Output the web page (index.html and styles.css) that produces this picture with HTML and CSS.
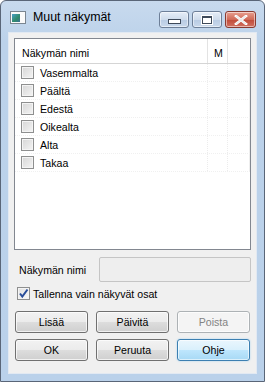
FILE: index.html
```html
<!DOCTYPE html>
<html lang="fi">
<head>
  <meta charset="UTF-8">
  <title>Muut näkymät</title>
  <link rel="stylesheet" href="styles.css">
</head>
<body>
  <div class="window">
    <!-- Otsikkorivi -->
    <div class="titlebar">
      <span class="app-icon"><span class="app-icon-pic"></span></span>
      <span class="title">Muut näkymät</span>
      <div class="caption-buttons">
        <span class="cap-btn"><span class="min-glyph"></span></span>
        <span class="cap-btn"><span class="max-glyph"></span></span>
        <span class="cap-btn close">
          <svg width="14" height="10" viewBox="0 0 14 10"><path d="M2 1 L12 9 M12 1 L2 9" stroke="#fff" stroke-width="2.6" stroke-linecap="square"/><path d="M2 1 L12 9 M12 1 L2 9" stroke="#e9e9e9" stroke-width="1.2"/></svg>
        </span>
      </div>
    </div>

    <div class="client">
      <!-- Näkymälista -->
      <div class="listview">
        <div class="lv-header">
          <span class="col-name">Näkymän nimi</span>
          <span class="col-m">M</span>
          <span class="col-rest"></span>
        </div>
        <div class="lv-row"><span class="col-name"><span class="chk"></span>Vasemmalta</span><span class="col-m"></span><span class="col-rest"></span></div>
        <div class="lv-row"><span class="col-name"><span class="chk"></span>Päältä</span><span class="col-m"></span><span class="col-rest"></span></div>
        <div class="lv-row"><span class="col-name"><span class="chk"></span>Edestä</span><span class="col-m"></span><span class="col-rest"></span></div>
        <div class="lv-row"><span class="col-name"><span class="chk"></span>Oikealta</span><span class="col-m"></span><span class="col-rest"></span></div>
        <div class="lv-row"><span class="col-name"><span class="chk"></span>Alta</span><span class="col-m"></span><span class="col-rest"></span></div>
        <div class="lv-row"><span class="col-name"><span class="chk"></span>Takaa</span><span class="col-m"></span><span class="col-rest"></span></div>
      </div>

      <div class="name-row">
        <span class="label">Näkymän nimi</span>
        <span class="textbox"></span>
      </div>

      <div class="save-row">
        <span class="chk checked">
          <svg width="11" height="11" viewBox="0 0 11 11"><path d="M2 5.5 L4.3 8.5 L9.5 1.5" fill="none" stroke="#2a4e9a" stroke-width="2"/></svg>
        </span>
        <span>Tallenna vain näkyvät osat</span>
      </div>

      <div class="buttons">
        <span class="btn">Lisää</span>
        <span class="btn">Päivitä</span>
        <span class="btn disabled">Poista</span>
        <span class="btn">OK</span>
        <span class="btn">Peruuta</span>
        <span class="btn focused">Ohje</span>
      </div>
    </div>
  </div>
</body>
</html>
```

FILE: styles.css
```css
/* Yleiset */
body {
  margin: 0;
  background: #ffffff;
  font-family: 'Liberation Sans', Arial, sans-serif;
  font-size: 10.6px;
  color: #000;
}

.window {
  width: 265px;
  height: 382px;
  box-sizing: border-box;
  border: 1px solid #5a6678;
  border-radius: 6px 6px 0 0;
  background: linear-gradient(#c8daee, #bcd2ea 40px, #bad1ea);
  display: flex;
  flex-direction: column;
  overflow: hidden;
}

/* Otsikkorivi */
.titlebar {
  height: 30px;
  display: flex;
  align-items: center;
  padding: 0 9px;
  flex-shrink: 0;
}

.app-icon {
  width: 13px;
  height: 11px;
  border: 1px solid #7a8590;
  background: #fafafa;
  display: flex;
  align-items: center;
  padding-left: 1px;
  margin-top: 3px;
}

.app-icon-pic {
  width: 8px;
  height: 8px;
  background: linear-gradient(135deg, #4aa0c8, #2f8a6a 60%, #3c6e9a);
}

.title {
  font-size: 12.4px;
  margin-left: 7px;
  margin-top: 2px;
  color: #000;
}

.caption-buttons {
  margin-left: auto;
  display: flex;
  gap: 3px;
  margin-top: 7px;
  margin-right: -1px;
}

.cap-btn {
  width: 28px;
  height: 15px;
  border: 1px solid #6d7f98;
  border-radius: 3px;
  background: linear-gradient(#e6eef8, #cfdcec 50%, #b8cbe3 51%, #c9d9ec);
  display: flex;
  align-items: center;
  justify-content: center;
  box-shadow: inset 0 0 0 1px rgba(255, 255, 255, 0.5);
}

.cap-btn.close {
  width: 29px;
  border-color: #8a3a30;
  background: linear-gradient(#e8a090, #d06a58 50%, #c04a38 51%, #d07060);
}

.min-glyph {
  width: 11px;
  height: 3px;
  border: 1px solid #3e4a5a;
  background: #fff;
  margin-top: 4px;
}

.max-glyph {
  width: 8px;
  height: 5px;
  border: 1px solid #3e4a5a;
  border-top-width: 2px;
  background: #fff;
  box-shadow: 0 0 0 1px #fff;
}

/* Asiakasalue */
.client {
  flex: 1;
  margin: 1px 7px 7px 7px;
  background: #f0f0f0;
  border: 1px solid #e2e9f2;
  padding: 5px 5px 0 5px;
  display: flex;
  flex-direction: column;
}

.listview {
  height: 212px;
  box-sizing: border-box;
  border: 1px solid #828790;
  background: #ffffff;
}

.lv-header, .lv-row {
  display: flex;
}

.lv-header {
  height: 24px;
  border-bottom: 1px solid #d5d5d5;
  align-items: center;
}

.lv-header .col-name, .lv-header .col-m {
  border-right: 1px solid #e3e3e3;
  height: 100%;
  display: flex;
  align-items: center;
  padding-top: 3px;
  box-sizing: border-box;
}

.col-name {
  width: 193px;
  padding-left: 7px;
  box-sizing: border-box;
  display: flex;
  align-items: center;
}

.col-m {
  width: 20px;
  padding-left: 6px;
  box-sizing: border-box;
}

.col-rest {
  flex: 1;
  border-right: 1px solid #eeeeee;
}

.lv-row {
  height: 18px;
  border-bottom: 1px dotted #f0f0f0;
  box-sizing: border-box;
}

.lv-row .col-name {
  padding-left: 6px;
  border-right: 1px dotted #ececec;
}

.lv-row .col-m {
  border-right: 1px dotted #ececec;
}

.chk {
  width: 11px;
  height: 11px;
  border: 1px solid #8e8f8f;
  background: linear-gradient(135deg, #d6d6d6, #f4f4f4);
  box-shadow: inset 0 0 0 1px #f4f4f4;
  margin-right: 6px;
  flex-shrink: 0;
  display: flex;
  align-items: center;
  justify-content: center;
}

/* Nimikenttä */
.name-row {
  display: flex;
  align-items: center;
  margin-top: 7px;
}

.name-row .label {
  width: 80px;
  padding-left: 5px;
}

.textbox {
  flex: 1;
  height: 23px;
  border: 1px solid #c5c5c5;
  border-radius: 2px;
  background: #eeeeee;
}

.save-row {
  display: flex;
  align-items: center;
  margin-top: 5px;
  padding-left: 3px;
  height: 13px;
}

.save-row .chk {
  margin-right: 3px;
  background: linear-gradient(135deg, #e0e0e0, #fafafa);
}

/* Painikkeet */
.buttons {
  display: grid;
  grid-template-columns: 1fr 1fr 1fr;
  gap: 6px 8px;
  margin: 11px 1px 0 1px;
}

.btn {
  height: 22px;
  box-sizing: border-box;
  border: 1px solid #707070;
  border-radius: 3px;
  background: linear-gradient(#f2f2f2, #ebebeb 50%, #dddddd 51%, #cfcfcf);
  box-shadow: inset 0 0 0 1px rgba(255, 255, 255, 0.7);
  display: flex;
  align-items: center;
  justify-content: center;
}

.btn.disabled {
  border-color: #adb2b5;
  background: #f4f4f4;
  color: #838383;
}

.btn.focused {
  border-color: #3c7fb1;
  background: linear-gradient(#eaf6fd, #d9f0fc 50%, #bee6fd 51%, #a7d9f5);
  box-shadow: inset 0 0 0 1px rgba(255, 255, 255, 0.6), 0 0 2px #9fd0f0;
}
```
